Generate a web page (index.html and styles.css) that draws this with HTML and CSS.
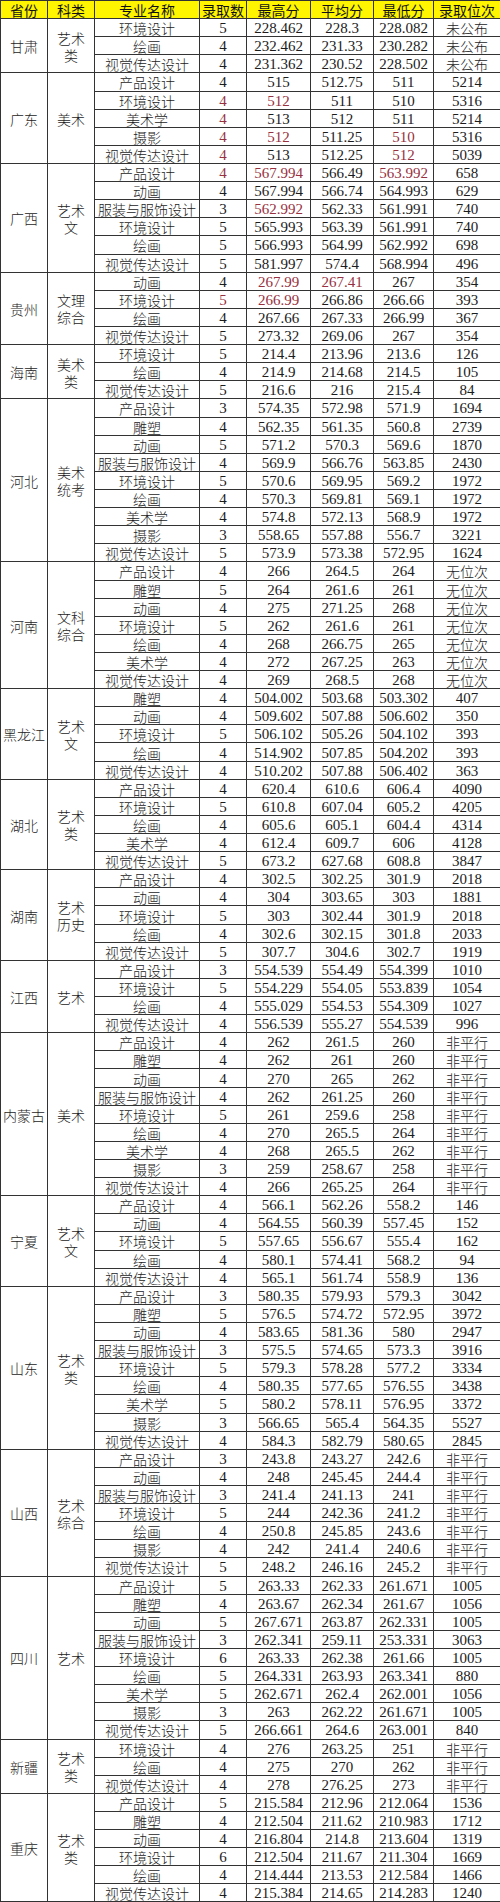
FILE: index.html
```html
<!DOCTYPE html>
<html lang="zh-CN">
<head>
<meta charset="utf-8">
<title>录取分数</title>
<link rel="stylesheet" href="styles.css">
</head>
<body>
<table class="score">
<colgroup>
<col class="w-prov"><col class="w-kind"><col class="w-major"><col class="w-num"><col class="w-hi"><col class="w-avg"><col class="w-lo"><col class="w-rank">
</colgroup>
<thead>
<tr><th>省份</th><th>科类</th><th>专业名称</th><th>录取数</th><th>最高分</th><th>平均分</th><th>最低分</th><th>录取位次</th></tr>
</thead>
<tbody>
<tr><td class="p" rowspan="3">甘肃</td><td class="p" rowspan="3">艺术<br>类</td><td class="m">环境设计</td><td>5</td><td>228.462</td><td>228.3</td><td>228.082</td><td class="m">未公布</td></tr>
<tr><td class="m">绘画</td><td>4</td><td>232.462</td><td>231.33</td><td>230.282</td><td class="m">未公布</td></tr>
<tr><td class="m">视觉传达设计</td><td>4</td><td>231.362</td><td>230.52</td><td>228.502</td><td class="m">未公布</td></tr>

<tr><td class="p" rowspan="5">广东</td><td class="p" rowspan="5">美术</td><td class="m">产品设计</td><td>4</td><td>515</td><td>512.75</td><td>511</td><td>5214</td></tr>
<tr><td class="m">环境设计</td><td class="r">4</td><td class="r">512</td><td>511</td><td>510</td><td>5316</td></tr>
<tr><td class="m">美术学</td><td class="r">4</td><td>513</td><td>512</td><td>511</td><td>5214</td></tr>
<tr><td class="m">摄影</td><td class="r">4</td><td class="r">512</td><td>511.25</td><td class="r">510</td><td>5316</td></tr>
<tr><td class="m">视觉传达设计</td><td class="r">4</td><td>513</td><td>512.25</td><td class="r">512</td><td>5039</td></tr>

<tr><td class="p" rowspan="6">广西</td><td class="p" rowspan="6">艺术<br>文</td><td class="m">产品设计</td><td class="r">4</td><td class="r">567.994</td><td>566.49</td><td class="r">563.992</td><td>658</td></tr>
<tr><td class="m">动画</td><td>4</td><td>567.994</td><td>566.74</td><td>564.993</td><td>629</td></tr>
<tr><td class="m">服装与服饰设计</td><td>3</td><td class="r">562.992</td><td>562.33</td><td>561.991</td><td>740</td></tr>
<tr><td class="m">环境设计</td><td>5</td><td>565.993</td><td>563.39</td><td>561.991</td><td>740</td></tr>
<tr><td class="m">绘画</td><td>5</td><td>566.993</td><td>564.99</td><td>562.992</td><td>698</td></tr>
<tr><td class="m">视觉传达设计</td><td>5</td><td>581.997</td><td>574.4</td><td>568.994</td><td>496</td></tr>

<tr><td class="p" rowspan="4">贵州</td><td class="p" rowspan="4">文理<br>综合</td><td class="m">动画</td><td>4</td><td class="r">267.99</td><td class="r">267.41</td><td>267</td><td>354</td></tr>
<tr><td class="m">环境设计</td><td class="r">5</td><td class="r">266.99</td><td>266.86</td><td>266.66</td><td>393</td></tr>
<tr><td class="m">绘画</td><td>4</td><td>267.66</td><td>267.33</td><td>266.99</td><td>367</td></tr>
<tr><td class="m">视觉传达设计</td><td>5</td><td>273.32</td><td>269.06</td><td>267</td><td>354</td></tr>

<tr><td class="p" rowspan="3">海南</td><td class="p" rowspan="3">美术<br>类</td><td class="m">环境设计</td><td>5</td><td>214.4</td><td>213.96</td><td>213.6</td><td>126</td></tr>
<tr><td class="m">绘画</td><td>4</td><td>214.9</td><td>214.68</td><td>214.5</td><td>105</td></tr>
<tr><td class="m">视觉传达设计</td><td>5</td><td>216.6</td><td>216</td><td>215.4</td><td>84</td></tr>

<tr><td class="p" rowspan="9">河北</td><td class="p" rowspan="9">美术<br>统考</td><td class="m">产品设计</td><td>3</td><td>574.35</td><td>572.98</td><td>571.9</td><td>1694</td></tr>
<tr><td class="m">雕塑</td><td>4</td><td>562.35</td><td>561.35</td><td>560.8</td><td>2739</td></tr>
<tr><td class="m">动画</td><td>5</td><td>571.2</td><td>570.3</td><td>569.6</td><td>1870</td></tr>
<tr><td class="m">服装与服饰设计</td><td>4</td><td>569.9</td><td>566.76</td><td>563.85</td><td>2430</td></tr>
<tr><td class="m">环境设计</td><td>5</td><td>570.6</td><td>569.95</td><td>569.2</td><td>1972</td></tr>
<tr><td class="m">绘画</td><td>4</td><td>570.3</td><td>569.81</td><td>569.1</td><td>1972</td></tr>
<tr><td class="m">美术学</td><td>4</td><td>574.8</td><td>572.13</td><td>568.9</td><td>1972</td></tr>
<tr><td class="m">摄影</td><td>3</td><td>558.65</td><td>557.88</td><td>556.7</td><td>3221</td></tr>
<tr><td class="m">视觉传达设计</td><td>5</td><td>573.9</td><td>573.38</td><td>572.95</td><td>1624</td></tr>

<tr><td class="p" rowspan="7">河南</td><td class="p" rowspan="7">文科<br>综合</td><td class="m">产品设计</td><td>4</td><td>266</td><td>264.5</td><td>264</td><td class="m">无位次</td></tr>
<tr><td class="m">雕塑</td><td>5</td><td>264</td><td>261.6</td><td>261</td><td class="m">无位次</td></tr>
<tr><td class="m">动画</td><td>4</td><td>275</td><td>271.25</td><td>268</td><td class="m">无位次</td></tr>
<tr><td class="m">环境设计</td><td>5</td><td>262</td><td>261.6</td><td>261</td><td class="m">无位次</td></tr>
<tr><td class="m">绘画</td><td>4</td><td>268</td><td>266.75</td><td>265</td><td class="m">无位次</td></tr>
<tr><td class="m">美术学</td><td>4</td><td>272</td><td>267.25</td><td>263</td><td class="m">无位次</td></tr>
<tr><td class="m">视觉传达设计</td><td>4</td><td>269</td><td>268.5</td><td>268</td><td class="m">无位次</td></tr>

<tr><td class="p" rowspan="5">黑龙江</td><td class="p" rowspan="5">艺术<br>文</td><td class="m">雕塑</td><td>4</td><td>504.002</td><td>503.68</td><td>503.302</td><td>407</td></tr>
<tr><td class="m">动画</td><td>4</td><td>509.602</td><td>507.88</td><td>506.602</td><td>350</td></tr>
<tr><td class="m">环境设计</td><td>5</td><td>506.102</td><td>505.26</td><td>504.102</td><td>393</td></tr>
<tr><td class="m">绘画</td><td>4</td><td>514.902</td><td>507.85</td><td>504.202</td><td>393</td></tr>
<tr><td class="m">视觉传达设计</td><td>4</td><td>510.202</td><td>507.88</td><td>506.402</td><td>363</td></tr>

<tr><td class="p" rowspan="5">湖北</td><td class="p" rowspan="5">艺术<br>类</td><td class="m">产品设计</td><td>4</td><td>620.4</td><td>610.6</td><td>606.4</td><td>4090</td></tr>
<tr><td class="m">环境设计</td><td>5</td><td>610.8</td><td>607.04</td><td>605.2</td><td>4205</td></tr>
<tr><td class="m">绘画</td><td>4</td><td>605.6</td><td>605.1</td><td>604.4</td><td>4314</td></tr>
<tr><td class="m">美术学</td><td>4</td><td>612.4</td><td>609.7</td><td>606</td><td>4128</td></tr>
<tr><td class="m">视觉传达设计</td><td>5</td><td>673.2</td><td>627.68</td><td>608.8</td><td>3847</td></tr>

<tr><td class="p" rowspan="5">湖南</td><td class="p" rowspan="5">艺术<br>历史</td><td class="m">产品设计</td><td>4</td><td>302.5</td><td>302.25</td><td>301.9</td><td>2018</td></tr>
<tr><td class="m">动画</td><td>4</td><td>304</td><td>303.65</td><td>303</td><td>1881</td></tr>
<tr><td class="m">环境设计</td><td>5</td><td>303</td><td>302.44</td><td>301.9</td><td>2018</td></tr>
<tr><td class="m">绘画</td><td>4</td><td>302.6</td><td>302.15</td><td>301.8</td><td>2033</td></tr>
<tr><td class="m">视觉传达设计</td><td>5</td><td>307.7</td><td>304.6</td><td>302.7</td><td>1919</td></tr>

<tr><td class="p" rowspan="4">江西</td><td class="p" rowspan="4">艺术</td><td class="m">产品设计</td><td>3</td><td>554.539</td><td>554.49</td><td>554.399</td><td>1010</td></tr>
<tr><td class="m">环境设计</td><td>5</td><td>554.229</td><td>554.05</td><td>553.839</td><td>1054</td></tr>
<tr><td class="m">绘画</td><td>4</td><td>555.029</td><td>554.53</td><td>554.309</td><td>1027</td></tr>
<tr><td class="m">视觉传达设计</td><td>4</td><td>556.539</td><td>555.27</td><td>554.539</td><td>996</td></tr>

<tr><td class="p" rowspan="9">内蒙古</td><td class="p" rowspan="9">美术</td><td class="m">产品设计</td><td>4</td><td>262</td><td>261.5</td><td>260</td><td class="m">非平行</td></tr>
<tr><td class="m">雕塑</td><td>4</td><td>262</td><td>261</td><td>260</td><td class="m">非平行</td></tr>
<tr><td class="m">动画</td><td>4</td><td>270</td><td>265</td><td>262</td><td class="m">非平行</td></tr>
<tr><td class="m">服装与服饰设计</td><td>4</td><td>262</td><td>261.25</td><td>260</td><td class="m">非平行</td></tr>
<tr><td class="m">环境设计</td><td>5</td><td>261</td><td>259.6</td><td>258</td><td class="m">非平行</td></tr>
<tr><td class="m">绘画</td><td>4</td><td>270</td><td>265.5</td><td>264</td><td class="m">非平行</td></tr>
<tr><td class="m">美术学</td><td>4</td><td>268</td><td>265.5</td><td>262</td><td class="m">非平行</td></tr>
<tr><td class="m">摄影</td><td>3</td><td>259</td><td>258.67</td><td>258</td><td class="m">非平行</td></tr>
<tr><td class="m">视觉传达设计</td><td>4</td><td>266</td><td>265.25</td><td>264</td><td class="m">非平行</td></tr>

<tr><td class="p" rowspan="5">宁夏</td><td class="p" rowspan="5">艺术<br>文</td><td class="m">产品设计</td><td>4</td><td>566.1</td><td>562.26</td><td>558.2</td><td>146</td></tr>
<tr><td class="m">动画</td><td>4</td><td>564.55</td><td>560.39</td><td>557.45</td><td>152</td></tr>
<tr><td class="m">环境设计</td><td>5</td><td>557.65</td><td>556.67</td><td>555.4</td><td>162</td></tr>
<tr><td class="m">绘画</td><td>4</td><td>580.1</td><td>574.41</td><td>568.2</td><td>94</td></tr>
<tr><td class="m">视觉传达设计</td><td>4</td><td>565.1</td><td>561.74</td><td>558.9</td><td>136</td></tr>

<tr><td class="p" rowspan="9">山东</td><td class="p" rowspan="9">艺术<br>类</td><td class="m">产品设计</td><td>3</td><td>580.35</td><td>579.93</td><td>579.3</td><td>3042</td></tr>
<tr><td class="m">雕塑</td><td>5</td><td>576.5</td><td>574.72</td><td>572.95</td><td>3972</td></tr>
<tr><td class="m">动画</td><td>4</td><td>583.65</td><td>581.36</td><td>580</td><td>2947</td></tr>
<tr><td class="m">服装与服饰设计</td><td>3</td><td>575.5</td><td>574.65</td><td>573.3</td><td>3916</td></tr>
<tr><td class="m">环境设计</td><td>5</td><td>579.3</td><td>578.28</td><td>577.2</td><td>3334</td></tr>
<tr><td class="m">绘画</td><td>4</td><td>580.35</td><td>577.65</td><td>576.55</td><td>3438</td></tr>
<tr><td class="m">美术学</td><td>5</td><td>580.2</td><td>578.11</td><td>576.95</td><td>3372</td></tr>
<tr><td class="m">摄影</td><td>3</td><td>566.65</td><td>565.4</td><td>564.35</td><td>5527</td></tr>
<tr><td class="m">视觉传达设计</td><td>4</td><td>584.3</td><td>582.79</td><td>580.65</td><td>2845</td></tr>

<tr><td class="p" rowspan="7">山西</td><td class="p" rowspan="7">艺术<br>综合</td><td class="m">产品设计</td><td>3</td><td>243.8</td><td>243.27</td><td>242.6</td><td class="m">非平行</td></tr>
<tr><td class="m">动画</td><td>4</td><td>248</td><td>245.45</td><td>244.4</td><td class="m">非平行</td></tr>
<tr><td class="m">服装与服饰设计</td><td>3</td><td>241.4</td><td>241.13</td><td>241</td><td class="m">非平行</td></tr>
<tr><td class="m">环境设计</td><td>5</td><td>244</td><td>242.36</td><td>241.2</td><td class="m">非平行</td></tr>
<tr><td class="m">绘画</td><td>4</td><td>250.8</td><td>245.85</td><td>243.6</td><td class="m">非平行</td></tr>
<tr><td class="m">摄影</td><td>4</td><td>242</td><td>241.4</td><td>240.6</td><td class="m">非平行</td></tr>
<tr><td class="m">视觉传达设计</td><td>5</td><td>248.2</td><td>246.16</td><td>245.2</td><td class="m">非平行</td></tr>

<tr><td class="p" rowspan="9">四川</td><td class="p" rowspan="9">艺术</td><td class="m">产品设计</td><td>5</td><td>263.33</td><td>262.33</td><td>261.671</td><td>1005</td></tr>
<tr><td class="m">雕塑</td><td>4</td><td>263.67</td><td>262.34</td><td>261.67</td><td>1056</td></tr>
<tr><td class="m">动画</td><td>5</td><td>267.671</td><td>263.87</td><td>262.331</td><td>1005</td></tr>
<tr><td class="m">服装与服饰设计</td><td>3</td><td>262.341</td><td>259.11</td><td>253.331</td><td>3063</td></tr>
<tr><td class="m">环境设计</td><td>6</td><td>263.33</td><td>262.38</td><td>261.66</td><td>1005</td></tr>
<tr><td class="m">绘画</td><td>5</td><td>264.331</td><td>263.93</td><td>263.341</td><td>880</td></tr>
<tr><td class="m">美术学</td><td>5</td><td>262.671</td><td>262.4</td><td>262.001</td><td>1056</td></tr>
<tr><td class="m">摄影</td><td>3</td><td>263</td><td>262.22</td><td>261.671</td><td>1005</td></tr>
<tr><td class="m">视觉传达设计</td><td>5</td><td>266.661</td><td>264.6</td><td>263.001</td><td>840</td></tr>

<tr><td class="p" rowspan="3">新疆</td><td class="p" rowspan="3">艺术<br>类</td><td class="m">环境设计</td><td>4</td><td>276</td><td>263.25</td><td>251</td><td class="m">非平行</td></tr>
<tr><td class="m">绘画</td><td>4</td><td>275</td><td>270</td><td>262</td><td class="m">非平行</td></tr>
<tr><td class="m">视觉传达设计</td><td>4</td><td>278</td><td>276.25</td><td>273</td><td class="m">非平行</td></tr>

<tr><td class="p" rowspan="6">重庆</td><td class="p" rowspan="6">艺术<br>类</td><td class="m">产品设计</td><td>5</td><td>215.584</td><td>212.96</td><td>212.064</td><td>1536</td></tr>
<tr><td class="m">雕塑</td><td>4</td><td>212.504</td><td>211.62</td><td>210.983</td><td>1712</td></tr>
<tr><td class="m">动画</td><td>4</td><td>216.804</td><td>214.8</td><td>213.604</td><td>1319</td></tr>
<tr><td class="m">环境设计</td><td>6</td><td>212.504</td><td>211.67</td><td>211.304</td><td>1669</td></tr>
<tr><td class="m">绘画</td><td>4</td><td>214.444</td><td>213.53</td><td>212.584</td><td>1466</td></tr>
<tr><td class="m">视觉传达设计</td><td>4</td><td>215.384</td><td>214.65</td><td>214.283</td><td>1240</td></tr>
</tbody>
</table>
</body>
</html>
```

FILE: styles.css
```css
html, body {
  margin: 0;
  padding: 0;
  background: #ffffff;
}

.score {
  width: 500px;
  table-layout: fixed;
  border-collapse: collapse;
  font-family: "Liberation Serif", "Noto Sans CJK SC", serif;
  color: #1c1c1c;
}

.w-prov { width: 47px; }
.w-kind { width: 47px; }
.w-major { width: 105px; }
.w-num { width: 47px; }
.w-hi { width: 64px; }
.w-avg { width: 63px; }
.w-lo { width: 60px; }
.w-rank { width: 67px; }

.score tr {
  height: 18.11px;
}

.score th,
.score td {
  border: 1px solid #333333;
  padding: 2px 0 0 0;
  text-align: center;
  vertical-align: middle;
  line-height: 15px;
  font-size: 15px;
  font-weight: 400;
  white-space: nowrap;
  overflow: hidden;
}

.score th {
  background: #fff500;
  font-family: "Noto Sans CJK SC", sans-serif;
  font-size: 14px;
  color: #111111;
}

.score td.m,
.score td.p {
  font-family: "Noto Sans CJK SC", sans-serif;
  font-size: 14px;
  font-weight: 300;
}

.score td.p {
  line-height: 17px;
}

.score td.r {
  color: #983040;
}
```
